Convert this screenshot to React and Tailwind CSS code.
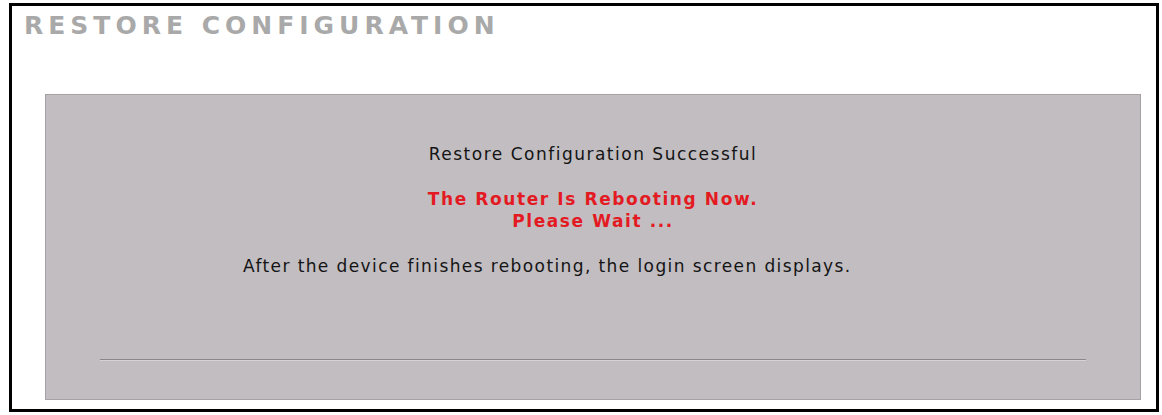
export default function App() {
  return (
    <div className="w-[1162px] h-[415px] bg-white pt-[3px] pl-[9px] font-['DejaVu_Sans',Verdana,sans-serif]">
      <div className="w-[1150px] h-[409px] border-[3px] border-black flex flex-col">
        <h1 className="mt-[6px] pl-[12px] text-[25px] leading-[28px] font-bold tracking-[5px] text-[#a9a9a9]">
          RESTORE CONFIGURATION
        </h1>

        <div className="mt-[54px] ml-[33px] w-[1096px] h-[306px] bg-[#c1bdc1] border border-[#a5a1a5] flex flex-col">
          <p className="mt-[49px] text-center text-[17px] leading-[20px] tracking-[1.5px] text-[#141414]">
            Restore Configuration Successful
          </p>
          <p className="mt-[24px] text-center text-[17px] leading-[22px] font-bold tracking-[1.6px] text-[#e41a22]">
            The Router Is Rebooting Now.
            <br />
            Please Wait ...
          </p>
          <p className="mt-[24px] pl-[197px] text-[17px] leading-[20px] tracking-[1.4px] text-[#141414]">
            After the device finishes rebooting, the login screen displays.
          </p>
          <div className="mt-[83px] mx-[54px] border-t border-t-[#8a868a] border-b border-b-[#d6d3d6]" />
        </div>
      </div>
    </div>
  );
}
